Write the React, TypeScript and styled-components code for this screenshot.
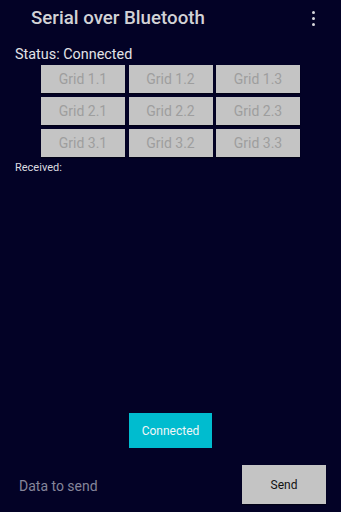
import React from 'react';
import styled, { createGlobalStyle } from 'styled-components';

const GlobalStyle = createGlobalStyle`
  html, body, #root {
    margin: 0;
    padding: 0;
    height: 100%;
  }
  body {
    background: #030226;
    font-family: Roboto, "Liberation Sans", sans-serif;
    overflow: hidden;
  }
`;

const Screen = styled.div`
  height: 100vh;
  display: flex;
  flex-direction: column;
  background: #030226;
`;

const Toolbar = styled.div`
  height: 36px;
  display: flex;
  align-items: center;
  justify-content: space-between;
  padding: 0 26px 0 31px;
`;

const Title = styled.div`
  color: #d2d2d6;
  font-size: 18.7px;
  font-weight: 500;
`;

const MenuDots = styled.div`
  display: flex;
  flex-direction: column;
  gap: 2.5px;
  margin-top: 1px;

  span {
    width: 3.5px;
    height: 3.5px;
    border-radius: 50%;
    background: #d6d6da;
  }
`;

const Status = styled.div`
  color: #e2e2e6;
  font-size: 14.4px;
  padding: 10px 0 0 15px;
  line-height: 17px;
`;

const Grid = styled.div`
  align-self: center;
  display: grid;
  grid-template-columns: repeat(3, 84px);
  gap: 4px 3.5px;
  margin-top: 2px;
`;

const GridButton = styled.div`
  height: 28px;
  background: #c4c4c4;
  color: #9e9e9e;
  font-size: 14px;
  display: flex;
  align-items: center;
  justify-content: center;
  box-shadow: 0 1px 1px rgba(0, 0, 0, 0.4);
`;

const Received = styled.div`
  color: #dcdce0;
  font-size: 11px;
  padding: 4px 0 0 15px;
`;

const Spacer = styled.div`
  flex: 1;
`;

const ConnectedButton = styled.div`
  align-self: center;
  width: 83px;
  height: 35px;
  background: #00bccf;
  color: #f2f6f8;
  font-size: 12px;
  display: flex;
  align-items: center;
  justify-content: center;
`;

const BottomRow = styled.div`
  display: flex;
  align-items: center;
  justify-content: space-between;
  padding: 17px 15px 8px 19px;
`;

const DataInput = styled.div`
  color: #85859a;
  font-size: 14px;
  padding-top: 2px;
`;

const SendButton = styled.div`
  width: 84px;
  height: 39px;
  background: #c4c4c4;
  color: #111;
  font-size: 12px;
  display: flex;
  align-items: center;
  justify-content: center;
  box-shadow: 0 1px 1px rgba(0, 0, 0, 0.4);
`;

const cells = ['1.1', '1.2', '1.3', '2.1', '2.2', '2.3', '3.1', '3.2', '3.3'];

export default function App() {
  return (
    <>
      <GlobalStyle />
      <Screen>
        <Toolbar>
          <Title>Serial over Bluetooth</Title>
          <MenuDots>
            <span />
            <span />
            <span />
          </MenuDots>
        </Toolbar>
        <Status>Status: Connected</Status>
        <Grid>
          {cells.map((c) => (
            <GridButton key={c}>Grid {c}</GridButton>
          ))}
        </Grid>
        <Received>Received:</Received>
        <Spacer />
        <ConnectedButton>Connected</ConnectedButton>
        <BottomRow>
          <DataInput>Data to send</DataInput>
          <SendButton>Send</SendButton>
        </BottomRow>
      </Screen>
    </>
  );
}
